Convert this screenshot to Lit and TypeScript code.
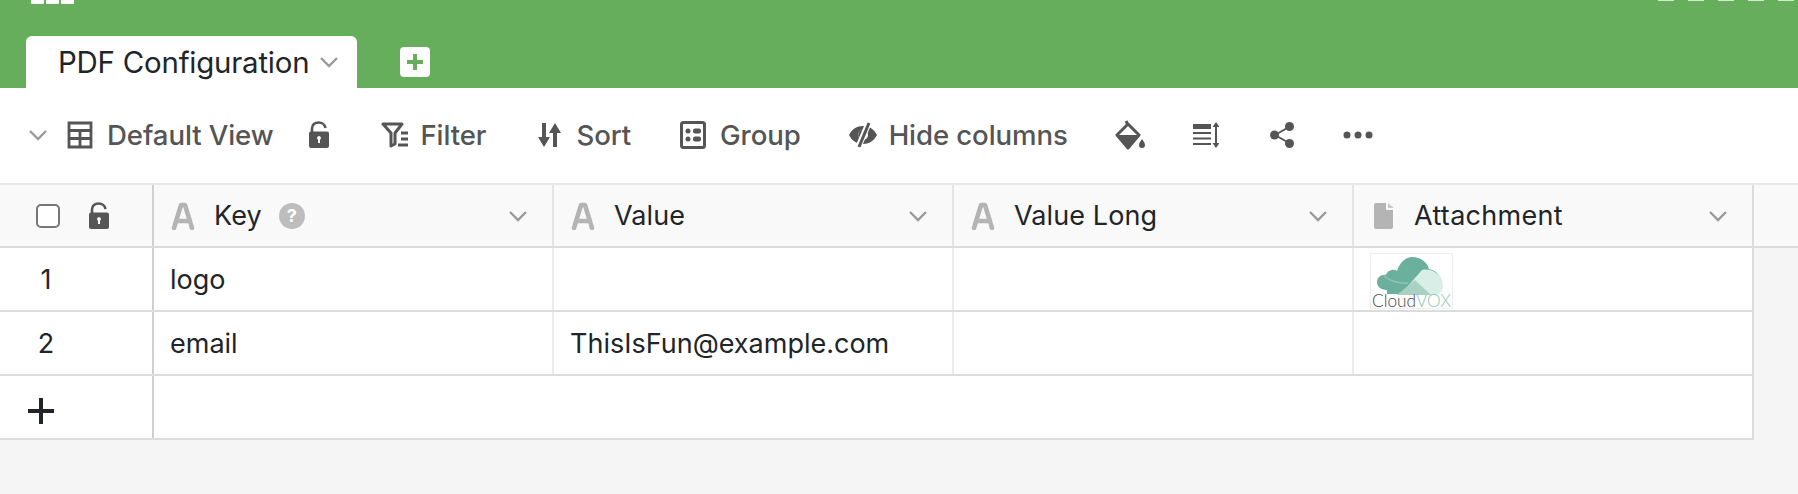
import { LitElement, html, css, svg } from "lit";
import { customElement } from "lit/decorators.js";

const chevron = (c = "chev") => html`<svg class=${c} viewBox="0 0 20 12" width="20" height="12"><path d="M2 2l8 8 8-8" fill="none" stroke="currentColor" stroke-width="2.400"/></svg>`;
const letterA = html`<svg class="ficon" viewBox="0 0 24 28" width="24" height="28"><path d="M3 26L10 3h4l7 23M6.500 19h11" fill="none" stroke="#b4b4b4" stroke-width="4.500" stroke-linecap="round" stroke-linejoin="round"/></svg>`;
const lock = (w = 22, h = 27) => html`<svg viewBox="0 0 22 27" width=${w} height=${h}><path d="M4 11V7.500C4 3.500 7 1.500 10.500 1.500S17 3.500 17.500 7" fill="none" stroke="#555" stroke-width="2.600"/><path fill-rule="evenodd" d="M3 10.500h16a2 2 0 0 1 2 2V25a2 2 0 0 1-2 2H3a2 2 0 0 1-2-2V12.500a2 2 0 0 1 2-2zM11 15a2 2 0 0 0-1 3.700V22h2v-3.300A2 2 0 0 0 11 15z" fill="#555"/></svg>`;

@customElement("app-root")
export class AppRoot extends LitElement {
  static styles = css`
    :host { display: block; width: 1798px; height: 494px; overflow: hidden; background: #f5f5f5; font-family: Inter, "Liberation Sans", sans-serif; color: #212529; }
    .top { height: 88px; background: #67ae5c; display: flex; flex-direction: column; box-sizing: border-box; }
    .strip { height: 36px; display: flex; justify-content: space-between; padding-left: 31px; }
    .blocks { display: flex; gap: 2px; height: 4px; }
    .blocks i { width: 13px; background: #fff; border-radius: 0 0 1px 1px; }
    .cut { display: flex; gap: 14px; height: 1px; margin-right: 4px; }
    .cut i { background: #d5ead1; width: 16px; height: 1px; }
    .tabs { height: 52px; display: flex; align-items: center; padding-left: 26px; }
    .tab { width: 331px; height: 52px; box-sizing: border-box; background: #fff; border-radius: 6px 6px 0 0; display: flex; align-items: center; padding-left: 32px; gap: 10px; font-size: 29.400px; letter-spacing: -.2px; color: #212529; white-space: nowrap; }
    .tab .chev { color: #9a9a9a; }
    .add { margin-left: 43px; width: 30px; height: 30px; background: #fff; border-radius: 4px; display: flex; align-items: center; justify-content: center; }
    .bar { height: 95px; box-sizing: border-box; padding-bottom: 2px; background: #fff; display: flex; align-items: center; color: #555; font-size: 27.600px; font-weight: 500; letter-spacing: -.1px; }
    .bar .chev { color: #9a9a9a; margin-left: 28px; margin-right: 19px; }
    .it { display: flex; align-items: center; white-space: nowrap; }
    .head { display: grid; grid-template-columns: 154px repeat(4, 400px) 1fr; height: 65px; box-sizing: border-box; border-top: 2px solid #e8e8e8; border-bottom: 2px solid #dcdcdc; background: #f9f9f9; font-size: 27px; letter-spacing: .1px; }
    .row { display: grid; grid-template-columns: 154px repeat(4, 400px); width: 1754px; height: 64px; box-sizing: border-box; border-bottom: 2px solid #dcdcdc; background: #fff; font-size: 27px; }
    .c { box-sizing: border-box; border-right: 2px solid #ececec; display: flex; align-items: center; padding-left: 16px; white-space: nowrap; }
    .head .c { border-right-color: #e4e4e4; position: relative; padding-left: 17px; }
    .c.idx, .head .c.idx { border-right: 2px solid #d0d0d0; padding-left: 0; }
    .c.last { border-right-color: #dcdcdc; }
    .head .c.last { padding-left: 20px; border-right-color: #dcdcdc; }
    .head .name { margin-left: 19px; }
    .head .name.doc { margin-left: 20px; letter-spacing: .3px; }
    .head .chev { position: absolute; right: 24px; top: 25px; color: #9a9a9a; }
    .num { width: 92px; text-align: center; }
    .check { width: 24px; height: 24px; border: 2px solid #777; border-radius: 5px; box-sizing: border-box; background: #fff; margin-left: 36px; margin-right: 28px; }
    .help { width: 26px; height: 26px; border-radius: 50%; background: #bdbdbd; color: #fff; font-size: 18px; font-weight: 700; display: flex; align-items: center; justify-content: center; margin-left: 17px; }
    .span { grid-column: 2 / 6; border-right: 2px solid #dcdcdc; }
    .plus { margin-left: 27px; margin-top: 8px; display: block; }
    .imgcell { align-items: flex-start; padding-top: 5px; }
    .logo { overflow: visible; }
    .s { margin-right: 14px; }
  `;

  render() {
    const cols = ["Value", "Value Long"];
    return html`
      <div class="top">
        <div class="strip">
          <div class="blocks"><i></i><i></i><i></i></div>
          <div class="cut"><i></i><i></i><i></i><i></i><i></i></div>
        </div>
        <div class="tabs">
          <div class="tab"><span>PDF Configuration</span>${chevron()}</div>
          <div class="add"><svg viewBox="0 0 30 30" width="30" height="30"><path d="M15 7v16M7 15h16" stroke="#67ae5c" stroke-width="4"/></svg></div>
        </div>
      </div>
      <div class="bar">
        ${chevron()}
        <div class="it" style="margin-right:35px"><svg class="s" viewBox="0 0 26 28" width="26" height="28"><path d="M2 2h22v24H2zM2 9.500h22M2 17.500h22M13 9.500V26" fill="none" stroke="#555" stroke-width="2.800"/></svg>Default View</div>
        <div class="it" style="margin-right:51px">${lock()}</div>
        <div class="it" style="margin-right:52px"><svg viewBox="0 0 30 28" width="30" height="28" style="margin-right:9px"><path d="M2 3h19l-7 9v11l-4 2V12z" fill="none" stroke="#555" stroke-width="3" stroke-linejoin="round"/><path d="M20 12h7M20 18h7M17 24h10" stroke="#555" stroke-width="3"/></svg>Filter</div>
        <div class="it" style="margin-right:49px"><svg class="s" viewBox="0 0 24 28" width="24" height="28"><path d="M6 2v20" stroke="#555" stroke-width="4"/><path d="M0 16h12l-6 10z" fill="#555"/><path d="M17 26V8" stroke="#555" stroke-width="4"/><path d="M11 12h12L17 2z" fill="#555"/></svg>Sort</div>
        <div class="it" style="margin-right:48px"><svg class="s" viewBox="0 0 26 28" width="26" height="28"><rect x="1.500" y="1.500" width="23" height="25" rx="2" fill="none" stroke="#555" stroke-width="3"/><circle cx="8" cy="10" r="2.500" fill="#555"/><circle cx="8" cy="18" r="2.500" fill="#555"/><rect x="13" y="7.500" width="8" height="5" rx="2" fill="#555"/><rect x="13" y="15.500" width="8" height="5" rx="2" fill="#555"/></svg>Group</div>
        <div class="it" style="margin-right:47px"><svg viewBox="0 0 28 28" width="28" height="28" style="margin-right:12px"><path fill-rule="evenodd" d="M0 14C3 8 8 5 14 5s11 3 14 9c-3 6-8 9-14 9S3 20 0 14zM14 9a5 5 0 1 0 0 10 5 5 0 0 0 0-10z" fill="#555"/><path d="M14 9a5 5 0 0 1 4 2l-6 7.500A5 5 0 0 1 14 9z" fill="#555"/><path d="M20 1L9 27" stroke="#fff" stroke-width="6"/><path d="M20 2L10 26" stroke="#555" stroke-width="3"/></svg>Hide columns</div>
        <div class="it" style="margin-right:48px"><svg viewBox="0 0 30 30" width="30" height="30"><path d="M11 1l2 4" stroke="#555" stroke-width="3"/><path d="M13 4L24 15 13 28 2 15z" fill="none" stroke="#555" stroke-width="3" stroke-linejoin="round"/><path d="M2 15h22L13 28z" fill="#555"/><path d="M27 19c2 3 3 4 3 6a3 3 0 0 1-6 0c0-2 1-3 3-6z" fill="#555"/></svg></div>
        <div class="it" style="margin-right:50px"><svg viewBox="0 0 26 28" width="26" height="28"><path d="M0 3h18v5H0z" fill="#555"/><path d="M0 12h18M0 17.500h18M0 23h18" stroke="#555" stroke-width="2"/><path d="M23 3v22" stroke="#555" stroke-width="2"/><path d="M19.500 6L23 1l3.500 5zM19.500 22l3.500 5 3.500-5z" fill="#555"/></svg></div>
        <div class="it" style="margin-right:48px"><svg viewBox="0 0 26 26" width="26" height="26"><path d="M6 13L20 5M6 13l14 8" stroke="#555" stroke-width="2"/><circle cx="5.500" cy="13" r="4.500" fill="#555"/><circle cx="20.500" cy="4.500" r="4.500" fill="#555"/><circle cx="20.500" cy="21.500" r="4.500" fill="#555"/></svg></div>
        <div class="it"><svg viewBox="0 0 30 8" width="30" height="8"><circle cx="4" cy="4" r="3.500" fill="#555"/><circle cx="15" cy="4" r="3.500" fill="#555"/><circle cx="26" cy="4" r="3.500" fill="#555"/></svg></div>
      </div>
      <div class="head">
        <div class="c idx"><span class="check"></span>${lock()}</div>
        <div class="c">${letterA}<span class="name">Key</span><span class="help">?</span>${chevron()}</div>
        ${cols.map((n) => html`<div class="c">${letterA}<span class="name">${n}</span>${chevron()}</div>`)}
        <div class="c last"><svg class="ficon" viewBox="0 0 20 28" width="20" height="28"><path d="M2 1h10v7h7v17a2 2 0 0 1-2 2H2a2 2 0 0 1-2-2V3a2 2 0 0 1 2-2z" fill="#b4b4b4"/><path d="M14 1l6 5h-6z" fill="#c8c8c8"/></svg><span class="name doc">Attachment</span>${chevron()}</div>
        <div></div>
      </div>
      <div class="row">
        <div class="c idx"><span class="num">1</span></div>
        <div class="c">logo</div>
        <div class="c"></div>
        <div class="c"></div>
        <div class="c last imgcell">${this.logo()}</div>
      </div>
      <div class="row">
        <div class="c idx"><span class="num">2</span></div>
        <div class="c">email</div>
        <div class="c">ThisIsFun@example.com</div>
        <div class="c"></div>
        <div class="c last"></div>
      </div>
      <div class="row">
        <div class="c idx"><svg class="plus" viewBox="0 0 28 28" width="28" height="28"><path d="M14 1v26M1 14h26" stroke="#212529" stroke-width="4"/></svg></div>
        <div class="c span"></div>
      </div>
    `;
  }

  logo() {
    return html`<svg class="logo" viewBox="0 0 83 56" width="83" height="56">
      <rect x=".5" y=".5" width="82" height="55" fill="#fff" stroke="#eee"/>
      ${svg`
      <path d="M17 37c-7 0-10-4-10-8 0-5 5-8 9-7 1-4 7-7 11-4 3-9 9-14 15-14 9 0 15 5 17 12 7 1 13 8 13 14 0 7-5 11-12 11H17z" fill="#6bb09c"/>
      <path d="M52 17c9-2 21 4 21 16 0 5-4 9-8 9H30z" fill="#d9eee7"/>
      <path d="M45 27l-18 15h34z" fill="#a8d1c4"/>
      <path d="M14 23c6 5 16 8 24 7" fill="none" stroke="#8ec6b6" stroke-width="1.500"/>
      <text x="2" y="54" font-size="18" font-family="Lato, sans-serif" font-weight="300" fill="#444" textLength="79" lengthAdjust="spacingAndGlyphs">Cloud<tspan fill="#8cc4b4">VOX</tspan></text>
      `}
    </svg>`;
  }
}
